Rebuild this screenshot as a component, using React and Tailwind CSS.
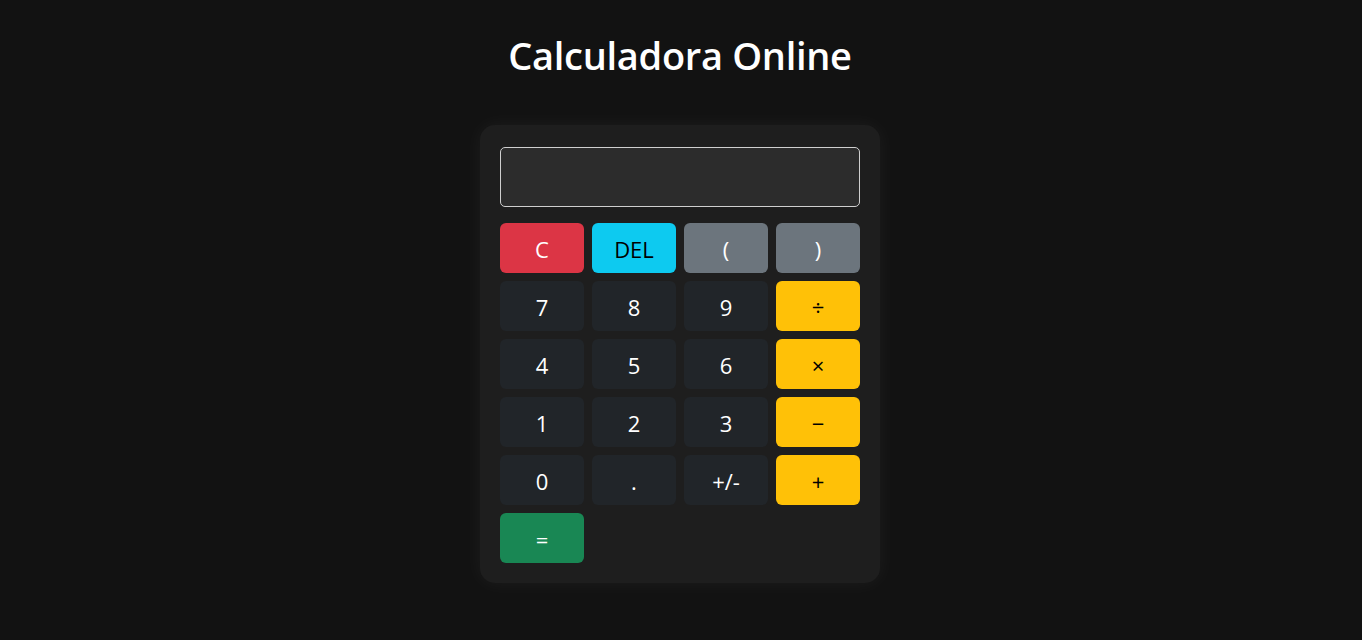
import React from "react";

const keys = [
  ["C", "bg-[#dc3545] text-white"],
  ["DEL", "bg-[#0dcaf0] text-black"],
  ["(", "bg-[#6c757d] text-white"],
  [")", "bg-[#6c757d] text-white"],
  ["7", "bg-[#212529] text-white"],
  ["8", "bg-[#212529] text-white"],
  ["9", "bg-[#212529] text-white"],
  ["÷", "bg-[#ffc107] text-black"],
  ["4", "bg-[#212529] text-white"],
  ["5", "bg-[#212529] text-white"],
  ["6", "bg-[#212529] text-white"],
  ["×", "bg-[#ffc107] text-black"],
  ["1", "bg-[#212529] text-white"],
  ["2", "bg-[#212529] text-white"],
  ["3", "bg-[#212529] text-white"],
  ["−", "bg-[#ffc107] text-black"],
  ["0", "bg-[#212529] text-white"],
  [".", "bg-[#212529] text-white"],
  ["+/-", "bg-[#212529] text-white"],
  ["+", "bg-[#ffc107] text-black"],
  ["=", "bg-[#198754] text-white"],
];

export default function App() {
  return (
    <div
      className="min-h-[640px] bg-[#121212] text-white flex flex-col items-center pt-[31px] pr-[2px]"
      style={{ fontFamily: '"Open Sans", "Noto Sans", sans-serif' }}
    >
      <h1 className="text-[38px] leading-[48px] font-semibold tracking-[-0.3px] text-white">
        Calculadora Online
      </h1>
      <div className="mt-[46px] w-[400px] bg-[#1e1e1e] rounded-[15px] shadow-[0_0_20px_rgba(255,255,255,0.05)] px-5 pt-[22px] pb-5">
        <div className="h-[60px] w-full rounded-[5px] border border-[#cfcfcf] bg-[#2c2c2c]" />
        <div className="mt-4 grid grid-cols-4 gap-2">
          {keys.map(([label, cls]) => (
            <button
              key={label}
              className={`h-[50px] rounded-[6px] text-[22px] flex items-center justify-center pt-[2px] ${cls}`}
            >
              {label}
            </button>
          ))}
        </div>
      </div>
    </div>
  );
}
